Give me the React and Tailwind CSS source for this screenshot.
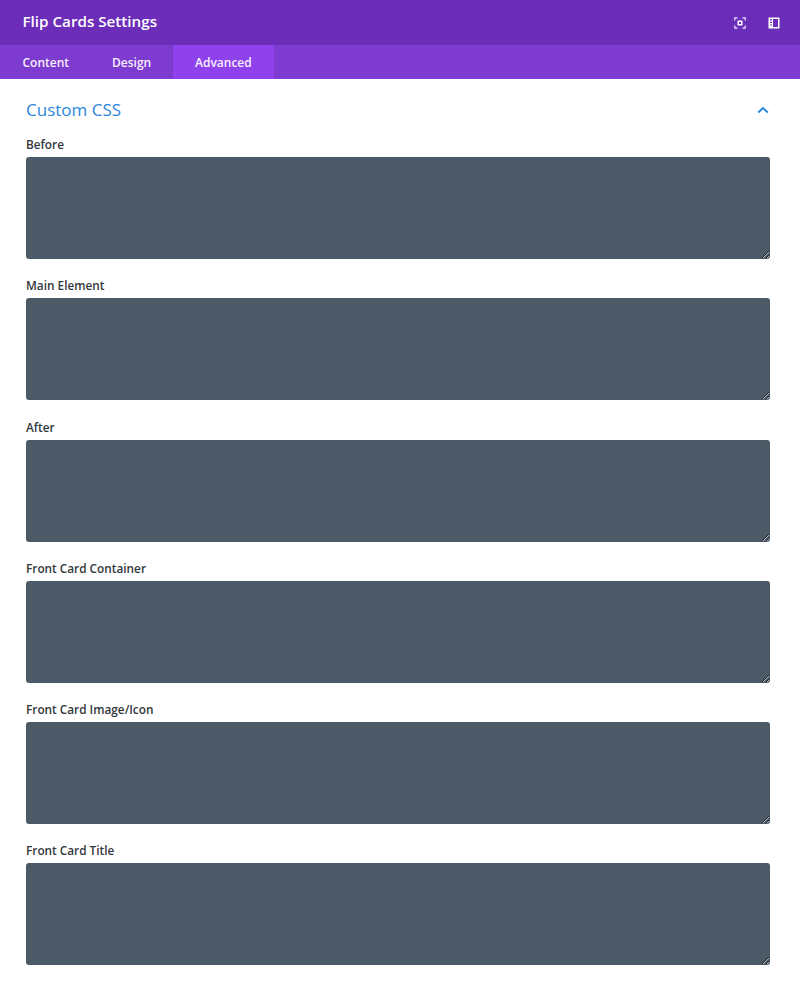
const fields = [
  { label: "Before", gap: "mt-0" },
  { label: "Main Element", gap: "mt-[18px]" },
  { label: "After", gap: "mt-[19px]" },
  { label: "Front Card Container", gap: "mt-[18px]" },
  { label: "Front Card Image/Icon", gap: "mt-[18px]" },
  { label: "Front Card Title", gap: "mt-[18px]" },
];

function FocusIcon() {
  return (
    <svg width="12" height="12" viewBox="0 0 12 12" fill="none" stroke="#f1e9fb" strokeWidth="1.2">
      <path d="M3.5 .8H.8v2.7M8.5 .8h2.7v2.7M3.5 11.2H.8V8.5M8.5 11.2h2.7V8.5" />
      <rect x="3.5" y="3.5" width="5" height="5" rx="0.6" fill="#fff" stroke="none" />
      <rect x="5" y="5" width="2" height="2" fill="#6c2eb9" stroke="none" />
    </svg>
  );
}

function SidebarIcon() {
  return (
    <svg width="12" height="12" viewBox="0 0 12 12">
      <path
        fill="#fff"
        fillRule="evenodd"
        d="M1 .5h10a.5.5 0 0 1 .5.5v10a.5.5 0 0 1-.5.5H1a.5.5 0 0 1-.5-.5V1A.5.5 0 0 1 1 .5ZM5 2v8h5V2H5ZM2 2.2v1.2h2V2.2H2Zm0 2.6V6h2V4.8H2Zm0 2.6v1.2h2V7.4H2Z"
      />
    </svg>
  );
}

export default function App() {
  return (
    <div className="h-[983px] w-[800px] overflow-hidden bg-white font-['Open_Sans',sans-serif]">
      <div className="flex h-[45px] items-center justify-between bg-[#6c2eb9] pb-[2px] pl-[22.5px] pr-5">
        <h1 className="text-[15.2px] font-semibold text-white">Flip Cards Settings</h1>
        <div className="flex items-center gap-[22px] pt-[2px]">
          <FocusIcon />
          <SidebarIcon />
        </div>
      </div>

      <div className="flex h-[34px] bg-[#7e3bd0] pt-[1px] text-[12px] font-[550] text-[#f6effd]">
        <div className="flex w-[91px] items-center pl-[22.5px]">Content</div>
        <div className="flex w-[82px] items-center pl-[21px]">Design</div>
        <div className="-mt-[1px] flex w-[101px] items-center bg-[#8f42ec] pt-[1px] pl-[22px]">Advanced</div>
      </div>

      <div className="px-[26px]">
        <div className="flex h-[57px] items-center justify-between pt-[4px]">
          <h2 className="text-[17px] text-[#2b87da]">Custom CSS</h2>
          <svg className="mr-[5px]" width="12" height="8" viewBox="0 0 12 8" fill="none" stroke="#2b87da" strokeWidth="2">
            <path d="M1.2 6.5 6 2l4.8 4.5" />
          </svg>
        </div>

        {fields.map((field) => (
          <div key={field.label} className={field.gap}>
            <label className="mb-[4px] block h-[17px] text-[11.8px] leading-[17px] font-[550] text-[#32373c]">
              {field.label}
            </label>
            <textarea className="block h-[102px] w-[744px] rounded-[3px] bg-[#4c5966] text-white outline-none" />
          </div>
        ))}
      </div>
    </div>
  );
}
